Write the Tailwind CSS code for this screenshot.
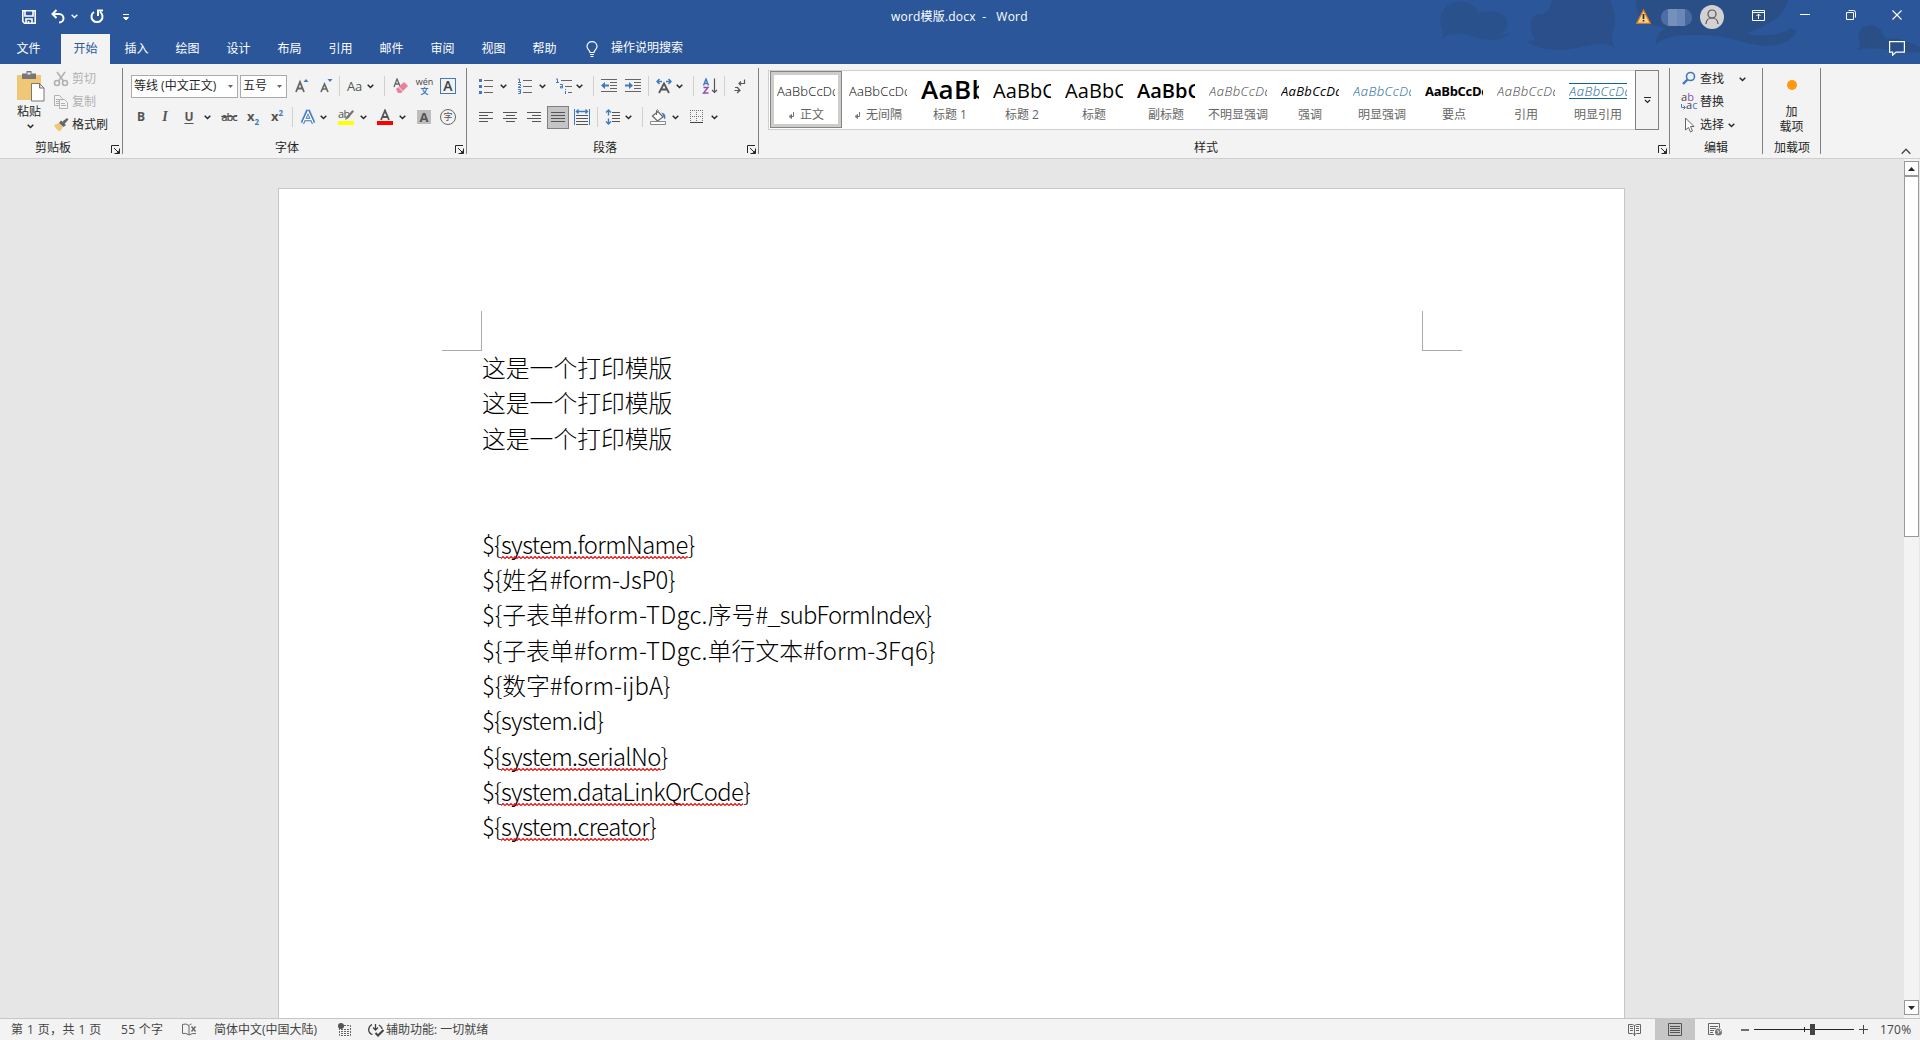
<!DOCTYPE html>
<html lang="zh-CN">
<head>
    <meta charset="UTF-8">
    <meta name="viewport" content="width=device-width, initial-scale=1.0">
    <title>word模版.docx - Word</title>
    <script src="https://cdn.jsdelivr.net/npm/@tailwindcss/browser@4"></script>
</head>
<body class="w-[1920px] h-[1040px] overflow-hidden flex flex-col bg-[#e6e6e6] font-['Open_Sans','Noto_Sans_CJK_SC',sans-serif] text-xs leading-4 text-[#262626]">

    <!-- Shared symbols -->
    <svg class="absolute" width="0" height="0">
        <symbol id="chev" viewBox="0 0 7 5"><path d="M.7.8 3.5 3.5 6.3.8" fill="none" stroke="currentColor" stroke-width="1.5"/></symbol>
        <symbol id="launch" viewBox="0 0 9 9"><path d="M.5 8V.5H8M3 3l4 4M8.5 3.5v5h-5" fill="none" stroke="#262626"/><path d="M8.500 5v3.500H5z" fill="#262626"/></symbol>
        <symbol id="enter" viewBox="0 0 7 7"><path d="M5.500 0v4.500H2M3.500 2.500v4L1 4.500z" fill="none" stroke="#666" stroke-width=".9"/></symbol>
        <pattern id="wave" width="4" height="3" patternUnits="userSpaceOnUse"><path d="M-2 .5 0 2.500 2 .5 4 2.500 6 .5" fill="none" stroke="#f00000" stroke-width="1.100"/></pattern>
    </svg>

    <header class="relative h-16 shrink-0 bg-[#2b579a] text-white">
        <!-- Title bar background art -->
        <svg class="absolute right-0 top-0" width="520" height="64" fill="#2a4b80">
            <g opacity=".75">
                <path d="M41 39c3-5 2-9 0-13-3-12 4-22 16-24 12-2 20 5 21 11 10-3 18-2 24 1 9 6 6 18-2 20 4 0 8-1 11-2-9 11-25 9-40 4-12-4-22-3-30 3z" opacity=".7"/>
                <path d="M126 40c4 1 7 1 9 0-7-10-6-26 5-26 8 0 10-5 12-14h58l5 14c1 8-1 15-3 22-1 4 1 8 3 12-11-7-24-3-38 0-20 4-41 2-51-8z" opacity=".8"/>
                <path d="M236 0h152c-2 8-6 14-12 18-8 6-20 12-30 16 14 3 36 1 44-5 14-2 2 17-24 17-22-2-40-11-62-11-26-1-42 2-48 10 0-10 4-14 10-17-20-4-30-8-30-28z"/>
                <path d="M457 50c3-4 4-7 2-11-3-10 9-17 18-12 7 4 5 13 14 12 8-2 18 3 29 8v5c-18 3-42-8-63-2z"/>
            </g>
        </svg>

        <div class="relative flex h-[34px] items-start">
            <svg class="ml-[22px] mt-[10px]" width="14" height="14" fill="none" stroke="#fff" stroke-width="1.6"><path d="M.8.8h12.400v12.400H2.500L.8 11.500zM3 1v5h8V1M4 13v-4h6v4M6.500 13v-2"/></svg>
            <svg class="ml-[15px] mt-[9px]" width="14" height="15" fill="none" stroke="#fff" stroke-width="2"><path d="M5.500 1 1.500 5l4 4M2 5h6c6 0 6 8.500 0 8.500"/></svg>
            <svg class="ml-[6px] mt-[14px]" width="7" height="5"><use href="#chev"/></svg>
            <svg class="ml-[12px] mt-[9px]" width="14" height="15" fill="none" stroke="#fff" stroke-width="2"><path d="M4 3a5.500 5.500 0 1 0 6 0M8 7V1.500h5"/></svg>
            <svg class="ml-[19px] mt-[14px]" width="6" height="7"><path d="M0 .5h6M.5 3.500h5L3 6z" fill="#fff" stroke="#fff"/></svg>
            <div class="ml-[762px] mt-[9px] w-[140px] whitespace-pre tracking-[0.2px]">word模版.docx&nbsp; -&nbsp;&nbsp; Word</div>
            <svg class="ml-[605px] mt-[9px]" width="15" height="15"><path d="M7.500 1 14.300 14.300H.7z" fill="#fbd58a" stroke="#d8751c" stroke-width="1.3"/><path d="M7.500 5v5M7.500 11v1.600" stroke="#262626" stroke-width="1.700"/></svg>
            <div class="ml-[10px] mt-[9px] flex h-[17px] w-[31px] overflow-hidden rounded-full bg-[#4a6ea8]">
                <div class="w-[7px] bg-[#4c6da5]"></div>
                <div class="w-[9px] bg-[#7590bd]"></div>
                <div class="w-[8px] bg-[#6b87b7]"></div>
                <div class="w-[7px] bg-[#47699f]"></div>
            </div>
            <svg class="ml-[8px] mt-[5px]" width="24" height="24" fill="none"><circle cx="12" cy="12" r="12" fill="#d2d2d2"/><circle cx="12" cy="9" r="4" stroke="#555" stroke-width="1.200"/><path d="M6 19c0-8 12-8 12 0" stroke="#555" stroke-width="1.200"/></svg>
            <svg class="ml-[28px] mt-[10px]" width="13" height="11" fill="none" stroke="#fff"><path d="M.5.5h12v10H.5zM.5 2.500h12M6.500 9V4M4.500 6l2-2 2 2"/></svg>
            <svg class="ml-[35px] mt-[14px]" width="10" height="1"><path d="M0 .5h10" stroke="#fff"/></svg>
            <svg class="ml-[36px] mt-[10px]" width="10" height="10" fill="none" stroke="#fff"><path d="M.5 2.500h7v7h-7zM2.500.5h5q2 0 2 2v5"/></svg>
            <svg class="ml-[36px] mt-[10px]" width="10" height="10" stroke="#fff" stroke-width="1.100"><path d="M.5.5l9 9M9.500.5l-9 9"/></svg>
        </div>

        <nav class="relative flex h-[30px] items-center gap-[2px]">
            <div class="ml-1 w-[55px] pr-[6px] text-center">文件</div>
            <div class="w-[49px] h-[30px] bg-[#f3f3f3] text-center leading-[30px] text-[#2b579a]">开始</div>
            <div class="w-[49px] text-center">插入</div>
            <div class="w-[49px] text-center">绘图</div>
            <div class="w-[49px] text-center">设计</div>
            <div class="w-[49px] text-center">布局</div>
            <div class="w-[49px] text-center">引用</div>
            <div class="w-[49px] text-center">邮件</div>
            <div class="w-[49px] text-center">审阅</div>
            <div class="w-[49px] text-center">视图</div>
            <div class="w-[49px] text-center">帮助</div>
            <svg class="ml-[15px]" width="12" height="16" fill="none" stroke="#fff" stroke-width="1.200"><path d="M4 11.500C4 9 1 8.500 1 5.500c0-6.500 10-6.500 10 0 0 3-3 3.500-3 6zM4 13.500h4M4.500 15.500h3"/></svg>
            <div class="ml-[11px] -mt-[2px]">操作说明搜索</div>
            <svg class="ml-auto mr-[15px] -mt-[2px]" width="16" height="15" fill="none" stroke="#fff" stroke-width="1.200"><path d="M.6.6h14.800v10.500H7L3.600 14.300v-3.200h-3z"/></svg>
        </nav>
    </header>

    <!-- Ribbon -->
    <div class="flex h-[95px] shrink-0 border-b border-[#cfcfcf] bg-[#f3f3f3] pt-1">

        <!-- Clipboard -->
        <section class="relative flex h-[86px] w-[123px] border-r border-[#808080]">
            <div class="ml-[16px] mt-[3px] flex w-[30px] flex-col">
                <svg width="29" height="31"><path d="M1 4h24v25H1z" fill="#efc777"/><path d="M6 2.500h4.500V0h5v2.500H20V8H6z" fill="#777"/><path d="M11.500 1.500h3v2h-3z" fill="#f3f3f3"/><path d="M15.500 12.500h8l4.500 4.500v13H15.500zM23.500 12.500V17H28" fill="#fff" stroke="#777"/></svg>
                <div class="mt-[2px] ml-[1px] whitespace-nowrap">粘贴</div>
                <svg class="ml-[11px] mt-[4px]" width="7" height="5"><use href="#chev"/></svg>
            </div>
            <div class="ml-[7px] mt-[3px] flex flex-col gap-[7px]">
                <div class="flex items-center gap-[3px] text-[#b1b1b1]">
                    <svg width="16" height="16" fill="none" stroke="#b1b1b1" stroke-width="1.600"><circle cx="4" cy="12" r="2.500"/><circle cx="12" cy="12" r="2.500"/><path d="M4 1l6.500 9M12 1 5.500 10"/></svg>剪切</div>
                <div class="flex items-center gap-[3px] text-[#b1b1b1]">
                    <svg width="16" height="16" fill="#f3f3f3" stroke="#b1b1b1"><path d="M1.500 1.500h5l3 3v7h-8zM3 5.500h4M3 7.500h4M3 9.500h4"/><path d="M6.500 5.500h5l3 3v6h-8zM8 9.500h4M8 11.500h5"/></svg>复制</div>
                <div class="flex items-center gap-[3px]">
                    <svg width="16" height="16"><path d="M1 8l5-2 4 4-3 4.500C5 14 3 12 1 8z" fill="#efc777"/><path d="M6 6l2-2.500L13 8l-2.500 2zM9.500 4.500 14 1l1.500 1.500-4 4.500z" fill="#666"/></svg>格式刷</div>
            </div>
            <div class="absolute bottom-[-2px] left-[35px]">剪贴板</div>
            <svg class="absolute bottom-0 right-[2px]" width="9" height="9"><use href="#launch"/></svg>
        </section>

        <!-- Font -->
        <section class="relative h-[86px] w-[344px] border-r border-[#808080] pl-2 pt-[6px]">
            <div class="flex h-6 items-center">
                <div class="flex h-[23px] w-[107px] items-center justify-between border border-[#ababab] bg-white pl-[2px] pr-[4px] whitespace-nowrap">等线 (中文正文)<svg width="5" height="3"><path d="M0 0h5L2.500 3z" fill="#666"/></svg></div>
                <div class="ml-[2px] flex h-[23px] w-[47px] items-center justify-between border border-[#ababab] bg-white pl-[2px] pr-[4px]">五号<svg width="5" height="3"><path d="M0 0h5L2.500 3z" fill="#666"/></svg></div>
                <svg class="ml-[7px]" width="16" height="16" fill="none"><path d="M2 14 6 4l4 10M3.500 10.500h5" stroke="#666" stroke-width="1.800"/><path d="M9.500 4h5L12 1z" fill="#4178be"/></svg>
                <svg class="ml-[8px]" width="16" height="16" fill="none"><path d="M3 14 6.500 6 10 14M4.300 11h4.500" stroke="#666" stroke-width="1.700"/><path d="M9.500 1h5L12 4z" fill="#4178be"/></svg>
                <div class="ml-[5px] h-5 w-px bg-[#d0d0d0]"></div>
                <div class="ml-[7px] w-4 text-[13px] tracking-[-0.3px] text-[#555]">Aa</div>
                <svg class="ml-[4px]" width="7" height="5"><use href="#chev"/></svg>
                <div class="ml-[10px] h-5 w-px bg-[#d0d0d0]"></div>
                <svg class="ml-[8px]" width="16" height="16" fill="none"><path d="M1 9 4 1l3 7M2 6h4" stroke="#666" stroke-width="1.300"/><path d="M3 11l8-7 4 4-7 7H5z" fill="#e8829a"/><path d="M5.500 9l4 4" stroke="#f3f3f3"/></svg>
                <div class="ml-[7px] flex w-[17px] flex-col items-center text-[9px] leading-[8px]"><span class="text-[#444]">wén</span><span class="text-[8px] leading-[9px] font-bold text-[#4178be]">文</span></div>
                <div class="ml-[7px] h-4 w-4 border border-[#4178be] text-center text-[14px] leading-[14px] font-semibold text-[#444]">A</div>
            </div>
            <div class="mt-[7px] flex h-6 items-center text-[#555]">
                <div class="ml-[2px] w-4 text-center font-bold">B</div>
                <div class="ml-[8px] w-4 text-center font-['Liberation_Serif'] text-[14px] font-bold italic">I</div>
                <div class="ml-[8px] w-4 text-center font-bold underline underline-offset-2">U</div>
                <svg class="ml-[7px] text-[#262626]" width="7" height="5"><use href="#chev"/></svg>
                <div class="ml-[10px] w-4 text-center text-[11px] font-semibold tracking-[-1px] line-through">abc</div>
                <div class="ml-[8px] w-4 whitespace-nowrap pl-[2px] text-[13px] font-bold">x<span class="relative top-[4px] text-[8px] text-[#4178be]">2</span></div>
                <div class="ml-[8px] w-4 whitespace-nowrap pl-[2px] text-[13px] font-bold">x<span class="relative -top-[5px] text-[8px] text-[#4178be]">2</span></div>
                <div class="ml-[7px] h-5 w-px bg-[#d0d0d0]"></div>
                <svg class="ml-[7px]" width="16" height="16" fill="none"><path d="M2.500 14 7.500 2.500h1L13.500 14M5 10.500h6" stroke="#a9c8ec" stroke-width="4.500"/><path d="M2.500 14 7.500 2.500h1L13.500 14M5 10.500h6" stroke="#3a72b5" stroke-width="3.200"/><path d="M2.800 13.700 8 2.500 13.200 13.700M5 10.500h6" stroke="#fff" stroke-width="1.300"/></svg>
                <svg class="ml-[4px] text-[#262626]" width="7" height="5"><use href="#chev"/></svg>
                <div class="relative ml-[11px] h-[16px] w-4 text-[11px] leading-[9px] tracking-[-0.5px]">ab<div class="absolute bottom-0 left-0 h-1 w-4 bg-[#ffff00]"></div>
                    <svg class="absolute left-[4px] top-0" width="12" height="12"><path d="M10.500 1 12 2.500 6 9.500 3 11l1-3z" fill="#777"/></svg>
                </div>
                <svg class="ml-[6px] text-[#262626]" width="7" height="5"><use href="#chev"/></svg>
                <svg class="ml-[10px]" width="16" height="16"><path d="M0 12h16v4H0z" fill="red"/><path d="M4 11 8 1.500 12 11M5.500 8h5" fill="none" stroke="#555" stroke-width="1.800"/></svg>
                <svg class="ml-[6px] text-[#262626]" width="7" height="5"><use href="#chev"/></svg>
                <div class="ml-[11px] h-[14px] w-[14px] bg-[#bdbdbd] text-center text-[13px] leading-[14px] font-bold">A</div>
                <div class="ml-[9px] h-4 w-4 rounded-full border border-[#666] text-center text-[9px] leading-[14px]">字</div>
            </div>
            <div class="absolute bottom-[-2px] left-[152px]">字体</div>
            <svg class="absolute bottom-0 right-[2px]" width="9" height="9"><use href="#launch"/></svg>
        </section>

        <!-- Paragraph -->
        <section class="relative h-[86px] w-[292px] border-r border-[#808080] pt-[6px]">
            <div class="flex h-6 items-center">
                <svg class="ml-[11px]" width="16" height="16"><path d="M6 2.500h9M6 8.500h9M6 14.500h9" stroke="#666"/><path d="M1 1h3v3H1zM1 7h3v3H1zM1 13h3v3H1z" fill="#4178be"/></svg>
                <svg class="ml-[6px]" width="7" height="5"><use href="#chev"/></svg>
                <svg class="ml-[10px]" width="16" height="16"><path d="M6 2.500h9M6 8.500h9M6 14.500h9" stroke="#666"/><path d="M1 1h1.500v3M1 4.500h3M1 6.500h2.500v1.500L1 9.500h3M1 11.500h2.500V15.500H1M1.500 13.500h2" fill="none" stroke="#4178be"/></svg>
                <svg class="ml-[6px]" width="7" height="5"><use href="#chev"/></svg>
                <svg class="ml-[9px]" width="17" height="16"><path d="M6 2.500h11M10 8.500h7M13 14.500h4" stroke="#666"/><path d="M1 1h1.500v3M1 4.500h3M5 6.500h2.500v3.500H5.500V8.500H7M10.500 11v1M10.500 13v3" fill="none" stroke="#4178be"/></svg>
                <svg class="ml-[4px]" width="7" height="5"><use href="#chev"/></svg>
                <div class="ml-[10px] h-5 w-px bg-[#d0d0d0]"></div>
                <svg class="ml-[7px]" width="16" height="14"><path d="M0 .5h16M9 3.500h7M9 6.500h7M9 9.500h7M0 12.500h16" stroke="#666"/><path d="M0 6.500 4 3v2.500h4v2H4V10z" fill="#4178be"/></svg>
                <svg class="ml-[8px]" width="16" height="14"><path d="M0 .5h16M9 3.500h7M9 6.500h7M9 9.500h7M0 12.500h16" stroke="#666"/><path d="M8 6.500 4 3v2.500H0v2h4V10z" fill="#4178be"/></svg>
                <div class="ml-[7px] h-5 w-px bg-[#d0d0d0]"></div>
                <svg class="ml-[7px]" width="16" height="16" fill="none"><path d="M3 15 8 5.500 13 15M5 11.500h6" stroke="#555" stroke-width="1.800"/><path d="M3.500 1 1 3.500 3.500 6M1 3.500h5M12.500 1 15 3.500 12.500 6M15 3.500h-5" stroke="#4178be" stroke-width="1.500"/></svg>
                <svg class="ml-[4px]" width="7" height="5"><use href="#chev"/></svg>
                <div class="ml-[10px] h-5 w-px bg-[#d0d0d0]"></div>
                <svg class="ml-[8px]" width="16" height="16" fill="none"><path d="M1.500 7.500 4 1l2.500 6.500M2.500 5.500h3" stroke="#4178be" stroke-width="1.400"/><path d="M1.500 9.500h4.500L1.500 15h5" stroke="#8c4fb0" stroke-width="1.400"/><path d="M12.500.5v14M10 12l2.500 2.500L15 12" stroke="#555" stroke-width="1.200"/></svg>
                <div class="ml-[6px] h-5 w-px bg-[#d0d0d0]"></div>
                <svg class="ml-[8px]" width="16" height="16" fill="none" stroke="#555" stroke-width="1.200"><path d="M11.500 1.500v4H6M8 3.500l-2 2 2 2M1.500 12.500h5M4 9l3 3.500L4 15M2 9.500h3"/></svg>
            </div>
            <div class="mt-[7px] flex h-6 items-center">
                <svg class="ml-[12px]" width="14" height="11"><path d="M0 .5h14M0 3.500h9M0 6.500h14M0 9.500h9" stroke="#555"/></svg>
                <svg class="ml-[10px]" width="14" height="11"><path d="M0 .5h14M3 3.500h9M0 6.500h14M3 9.500h9" stroke="#555"/></svg>
                <svg class="ml-[10px]" width="14" height="11"><path d="M0 .5h14M5 3.500h9M0 6.500h14M5 9.500h9" stroke="#555"/></svg>
                <div class="ml-[6px] flex h-[23px] w-[22px] items-center justify-center border border-[#808080] bg-[#c5c5c5]"><svg width="14" height="11"><path d="M0 .5h14M0 3.500h14M0 6.500h14M0 9.500h14" stroke="#555"/></svg></div>
                <svg class="ml-[5px]" width="16" height="16"><path d="M.5 0v16M15.500 0v16" stroke="#4178be"/><path d="M2 6.500h12M2 9.500h12M2 12.500h12M2 15.500h12" stroke="#555"/><path d="M2 2.500h12M4.500.5l-2 2 2 2M11.500.5l2 2-2 2" fill="none" stroke="#4178be" stroke-width="1.400"/></svg>
                <div class="ml-[7px] h-5 w-px bg-[#d0d0d0]"></div>
                <svg class="ml-[7px]" width="16" height="16"><path d="M7 3.500h8M7 6.500h8M7 9.500h8M7 12.500h8" stroke="#555"/><path d="M3.500 1v5.500M3.500 9.500V15M1 3.500 3.500 1 6 3.500M1 12.500 3.500 15 6 12.500" fill="none" stroke="#4178be" stroke-width="1.400"/></svg>
                <svg class="ml-[4px]" width="7" height="5"><use href="#chev"/></svg>
                <div class="ml-[10px] h-5 w-px bg-[#d0d0d0]"></div>
                <svg class="ml-[7px]" width="16" height="16"><path d="M2.500 7 8 2.500 13 8l-5.500 4z" fill="#fff" stroke="#666" stroke-width="1.200"/><path d="M6.500 6V1.500q1-1.500 2 0" fill="none" stroke="#666"/><path d="M11.500 3.500c4 1 4.500 4 3.500 7-1-1-1.500-3-2-4z" fill="#4178be"/><path d="M.5 12.500h15v3H.5z" fill="#fff" stroke="#888"/></svg>
                <svg class="ml-[6px]" width="7" height="5"><use href="#chev"/></svg>
                <svg class="ml-[11px]" width="13" height="14"><path d="M0 .5h13M.5 0v13M12.500 0v13M6.500 0v13M0 6.500h13" stroke="#777" stroke-dasharray="1 1"/><path d="M0 12.500h13" stroke="#444"/></svg>
                <svg class="ml-[8px]" width="7" height="5"><use href="#chev"/></svg>
            </div>
            <div class="absolute bottom-[-2px] left-[126px]">段落</div>
            <svg class="absolute bottom-0 right-[2px]" width="9" height="9"><use href="#launch"/></svg>
        </section>

        <!-- Styles gallery -->
        <section class="relative h-[86px] w-[911px] border-r border-[#808080] pl-[9px] pt-[2px]">
            <div class="flex h-[60px] w-[891px] border border-[#cfcfcf] bg-white pl-px text-center text-[#666]">
                <div class="h-[57px] w-[72px] border border-[#868686] p-[3px] bg-[#cdcdca]"><div class="flex h-[49px] flex-col items-center bg-white">
                    <div class="flex h-[32px] w-[58px] items-center overflow-hidden whitespace-nowrap text-black text-[13px] font-light tracking-[0.15px]">AaBbCcDd</div>
                    <div class="flex items-center gap-[5px]"><svg width="7" height="7"><use href="#enter"/></svg>正文</div></div></div>
                <div class="w-[72px] pt-1 flex flex-col items-center">
                    <div class="flex h-[32px] w-[58px] items-center overflow-hidden whitespace-nowrap text-black text-[13px] font-light tracking-[0.15px]">AaBbCcDd</div>
                    <div class="flex items-center gap-[5px]"><svg width="7" height="7"><use href="#enter"/></svg>无间隔</div></div>
                <div class="w-[72px] pt-1 flex flex-col items-center">
                    <div class="-mt-[2px] mb-[2px] flex h-[32px] w-[58px] items-center overflow-hidden whitespace-nowrap text-black text-[26px] font-semibold tracking-[0.4px]">AaBb</div>
                    <div>标题 1</div></div>
                <div class="w-[72px] pt-1 flex flex-col items-center">
                    <div class="flex h-[32px] w-[58px] items-center overflow-hidden whitespace-nowrap text-black text-[20px] tracking-[0.1px]">AaBbC</div>
                    <div>标题 2</div></div>
                <div class="w-[72px] pt-1 flex flex-col items-center">
                    <div class="flex h-[32px] w-[58px] items-center overflow-hidden whitespace-nowrap text-black text-[20px] tracking-[0.1px]">AaBbC</div>
                    <div>标题</div></div>
                <div class="w-[72px] pt-1 flex flex-col items-center">
                    <div class="flex h-[32px] w-[58px] items-center overflow-hidden whitespace-nowrap text-black text-[20px] font-semibold">AaBbC</div>
                    <div>副标题</div></div>
                <div class="w-[72px] pt-1 flex flex-col items-center">
                    <div class="flex h-[32px] w-[58px] items-center overflow-hidden whitespace-nowrap italic text-[#404040] text-[13px] font-light tracking-[0.5px]">AaBbCcDd</div>
                    <div>不明显强调</div></div>
                <div class="w-[72px] pt-1 flex flex-col items-center">
                    <div class="flex h-[32px] w-[58px] items-center overflow-hidden whitespace-nowrap italic text-black text-[13px] tracking-[0.3px]">AaBbCcDd</div>
                    <div>强调</div></div>
                <div class="w-[72px] pt-1 flex flex-col items-center">
                    <div class="flex h-[32px] w-[58px] items-center overflow-hidden whitespace-nowrap italic text-[#0f6490] text-[13px] font-light tracking-[0.5px]">AaBbCcDd</div>
                    <div>明显强调</div></div>
                <div class="w-[72px] pt-1 flex flex-col items-center">
                    <div class="flex h-[32px] w-[58px] items-center overflow-hidden whitespace-nowrap text-black text-[13px] font-bold tracking-[-0.3px]">AaBbCcDd</div>
                    <div>要点</div></div>
                <div class="w-[72px] pt-1 flex flex-col items-center">
                    <div class="flex h-[32px] w-[58px] items-center overflow-hidden whitespace-nowrap italic text-[#404040] text-[13px] font-light tracking-[0.5px]">AaBbCcDd</div>
                    <div>引用</div></div>
                <div class="w-[72px] pt-1 flex flex-col items-center">
                    <div class="mt-2 mb-2 flex h-[16px] w-[58px] items-center overflow-hidden whitespace-nowrap border-y border-[#0f6490] italic text-[#0f6490] text-[13px] font-light tracking-[0.5px]">AaBbCcDd</div>
                    <div>明显引用</div></div>
                <div class="-my-px -mr-px ml-auto flex h-[60px] w-[24px] items-center justify-center border border-[#808080] bg-[#f3f3f3]"><svg width="7" height="7"><path d="M0 .5h7M1 3l2.500 2.500L6 3" fill="none" stroke="#262626" stroke-width="1.200"/></svg></div>
            </div>
            <div class="absolute bottom-[-2px] left-[435px]">样式</div>
            <svg class="absolute bottom-0 right-[2px]" width="9" height="9"><use href="#launch"/></svg>
        </section>

        <!-- Editing -->
        <section class="relative flex h-[86px] w-[93px] flex-col gap-[7px] border-r border-[#808080] pl-[11px] pt-[3px]">
            <div class="flex items-center">
                <svg width="16" height="16" fill="none" stroke="#4178be"><circle cx="9.500" cy="5.500" r="4" stroke-width="1.600"/><path d="M6.500 8.500 2 13" stroke-width="2.400"/></svg>
                <span class="ml-[3px]">查找</span>
                <svg class="ml-[15px]" width="7" height="5"><use href="#chev"/></svg>
            </div>
            <div class="flex items-center">
                <div class="relative h-4 w-4 text-[11px] leading-[8px] text-[#444]">
                    <div class="-mt-px">a<span class="text-[#8c4fb0]">b</span></div>
                    <div class="pl-[5px]">a<span class="text-[#4178be]">c</span></div>
                    <svg class="absolute bottom-0 left-0" width="5" height="6"><path d="M.5 0v3.500H4M2.500 1.500l2 2-2 2" fill="none" stroke="#4178be"/></svg>
                </div>
                <span class="ml-[3px]">替换</span>
            </div>
            <div class="flex items-center">
                <svg width="16" height="16"><path d="M4.500 1v12l3-2.500 2 4.500 2-1-2-4.500h3.500z" fill="#fff" stroke="#666"/></svg>
                <span class="ml-[3px]">选择</span>
                <svg class="ml-[4px]" width="7" height="5"><use href="#chev"/></svg>
            </div>
            <div class="absolute bottom-[-2px] left-[34px]">编辑</div>
        </section>

        <!-- Add-ins -->
        <section class="relative flex h-[86px] w-[58px] flex-col items-center border-r border-[#808080] pt-[11px]">
            <svg width="12" height="12"><circle cx="6" cy="6" r="5" fill="#ff9a0d"/></svg>
            <div class="mt-[13px] w-9 text-center leading-[15px]">加<br>载项</div>
            <div class="absolute bottom-[-2px] left-[11px]">加载项</div>
        </section>
        <svg class="ml-auto mr-[9px] mt-[80px]" width="10" height="7"><path d="M.7 5.700 5 1.300l4.300 4.400" fill="none" stroke="#444" stroke-width="1.300"/></svg>
    </div>

    <!-- Document area -->
    <main class="flex h-[859px] shrink-0 overflow-hidden">
        <div class="relative ml-[278px] mt-[29px] h-[840px] w-[1347px] border border-[#c6c6c6] bg-white pl-[203px] pt-[160px]">
            <!-- Margin corners -->
            <div class="absolute left-[163px] top-[122px] h-[40px] w-[40px] border-b border-r border-[#ababab]"></div>
            <div class="absolute left-[1143px] top-[122px] h-[40px] w-[40px] border-b border-l border-[#ababab]"></div>

            <div class="font-['Noto_Sans_CJK_SC',sans-serif] text-[23.8px] leading-[35.35px] font-light text-black whitespace-nowrap">
                <p>这是一个打印模版</p>
                <p>这是一个打印模版</p>
                <p>这是一个打印模版</p>
                <p>&nbsp;</p>
                <p>&nbsp;</p>
                <p class="tracking-[-0.63px]">${<span class="relative">system.formName<svg class="absolute bottom-[2px] left-0 w-full" height="3"><rect width="100%" height="3" fill="url(#wave)"/></svg></span>}</p>
                <p>${姓名<span class="tracking-[-0.33px]">#form-JsP0}</span></p>
                <p>${子表单<span class="tracking-[0.3px]">#form-TDgc.</span>序号<span class="tracking-[-0.8px]">#_subFormIndex}</span></p>
                <p>${子表单<span class="tracking-[0.3px]">#form-TDgc.</span>单行文本<span class="tracking-[0.1px]">#form-3Fq6}</span></p>
                <p>${数字<span class="tracking-[0.1px]">#form-ijbA}</span></p>
                <p class="tracking-[-0.66px]">${system.id}</p>
                <p class="tracking-[-0.65px]">${<span class="relative">system.serialNo<svg class="absolute bottom-[2px] left-0 w-full" height="3"><rect width="100%" height="3" fill="url(#wave)"/></svg></span>}</p>
                <p class="tracking-[-0.64px]">${<span class="relative">system.dataLinkQrCode<svg class="absolute bottom-[2px] left-0 w-full" height="3"><rect width="100%" height="3" fill="url(#wave)"/></svg></span>}</p>
                <p class="tracking-[-0.61px]">${<span class="relative">system.creator<svg class="absolute bottom-[2px] left-0 w-full" height="3"><rect width="100%" height="3" fill="url(#wave)"/></svg></span>}</p>
            </div>
        </div>

        <!-- Scrollbar -->
        <div class="ml-auto mr-px flex w-[15px] flex-col bg-[#f3f3f3] pt-[2px]">
            <div class="flex h-[15px] items-center justify-center border border-[#999] bg-white"><svg width="7" height="4"><path d="M0 4h7L3.500 0z" fill="#262626"/></svg></div>
            <div class="h-[361px] border border-[#999] bg-white"></div>
            <div class="mt-auto mb-[3px] flex h-[15px] items-center justify-center border border-[#999] bg-white"><svg width="7" height="4"><path d="M0 0h7L3.500 4z" fill="#262626"/></svg></div>
        </div>
    </main>

    <!-- Status bar -->
    <footer class="flex h-[22px] shrink-0 items-center border-t border-[#c6c6c6] bg-[#f3f3f3] whitespace-nowrap text-[#444]">
        <div class="ml-[11px] w-[110px] tracking-[0.4px]">第 1 页，共 1 页</div>
        <div class="w-[61px] tracking-[0.3px]">55 个字</div>
        <svg width="15" height="13" fill="none" stroke="#666"><path d="M7 2.500Q4 0 .5 1.500v9Q4 9.500 7 12V2.500Q8 1 9.500 1M7 12q3-2 7-1.500"/><path d="M9.500 3.500l4 5M13.500 3.500l-4 5" stroke-width="1.400"/></svg>
        <div class="ml-[17px] w-[124px]">简体中文(中国大陆)</div>
        <svg width="13" height="13"><path d="M1.500 5v7.500h11v-10H6M3 6.500h8M3 8.500h8M3 10.500h8" fill="none" stroke="#666" stroke-dasharray="2 1"/><circle cx="3" cy="3" r="3" fill="#555"/></svg>
        <svg class="ml-[17px]" width="16" height="14" fill="none" stroke="#444" stroke-width="1.300"><path d="M4 1.500C-.5 4-.5 10 4.500 11.500M7.500 1v6M5 4.500l2.500 2.500L10 4.500M11 2q3 2 3 4"/><path d="M7.500 10l2.500 2.500L15.500 7" stroke-width="2"/></svg>
        <div class="ml-[2px]">辅助功能: 一切就绪</div>

        <svg class="ml-auto" width="13" height="13" fill="none" stroke="#666"><path d="M6.500 2.500V13M.5 1.500h4l2 1 2-1h4v9h-4l-2 1-2-1h-4zM2 3.500h3M2 5.500h3M2 7.500h3M8 3.500h3M8 5.500h3M8 7.500h3"/></svg>
        <div class="ml-[14px] flex h-[21px] w-[40px] items-center justify-center bg-[#c6c6c6]"><svg width="14" height="13" fill="none" stroke="#555"><path d="M.5.5h13v12H.5zM2 3.500h10M2 5.500h10M2 7.500h10M2 9.500h10"/></svg></div>
        <svg class="ml-[13px]" width="15" height="13" fill="none" stroke="#666"><path d="M6 11.500H.5V.5h11V5M2 3.500h8M2 5.500h6M2 7.500h4M2 9.500h3"/><circle cx="10.500" cy="9" r="3.500" fill="#777" stroke="none"/><path d="M9 7.500l2 1-1 2M12 6.500l1 2" stroke="#f3f3f3"/></svg>
        <svg class="ml-[18px]" width="8" height="2"><path d="M0 1h8" stroke="#262626" stroke-width="1.300"/></svg>
        <div class="relative ml-[5px] flex h-[11px] w-[100px] items-center">
            <div class="h-px w-full bg-[#262626]"></div>
            <div class="absolute left-[50px] top-[3px] h-[5px] w-px bg-[#262626]"></div>
            <div class="absolute left-[56px] top-0 h-[11px] w-[5px] bg-[#444]"></div>
        </div>
        <svg class="ml-[5px]" width="9" height="9"><path d="M0 4.500h9M4.500 0v9" stroke="#444"/></svg>
        <div class="ml-[12px] w-[40px] tracking-[0.2px]">170%</div>
    </footer>
</body>
</html>
